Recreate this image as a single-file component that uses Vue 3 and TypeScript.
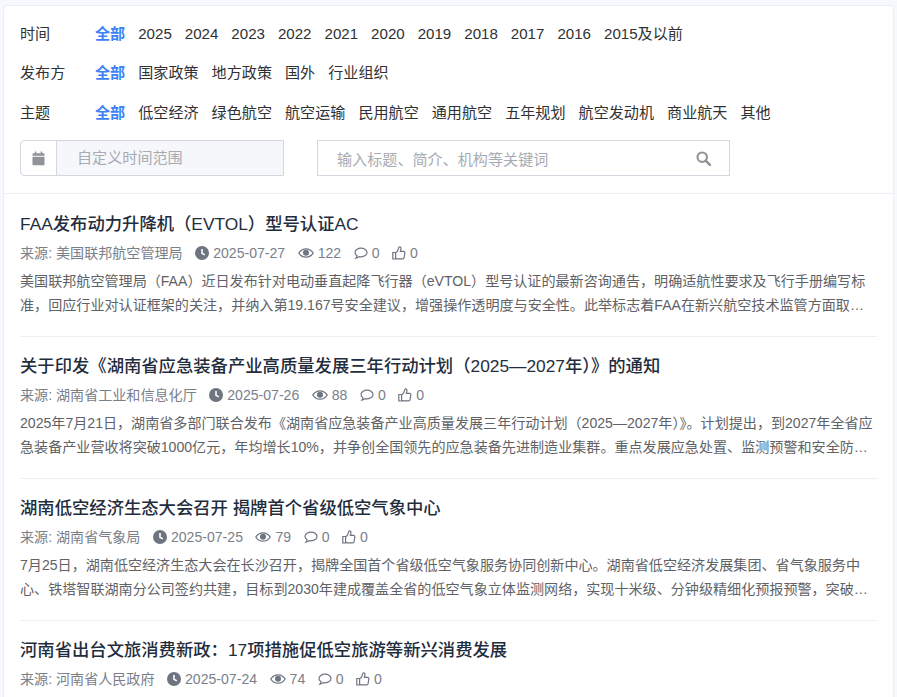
<template>
  <div class="page">
    <div class="card">
      <section class="filters">
        <div v-for="group in filterGroups" :key="group.label" class="filter-row">
          <span class="filter-label">{{ group.label }}</span>
          <div class="filter-options">
            <span class="option active">全部</span>
            <span v-for="item in group.options" :key="item" class="option">{{ item }}</span>
          </div>
        </div>
        <div class="search-row">
          <div class="date-range">
            <span class="date-icon">
              <svg width="13" height="15" viewBox="0 0 14 14" preserveAspectRatio="none">
                <path fill="#909399" d="M3 0.5h1.6v1.6h4.8V0.5H11v1.6h1.4c.6 0 1.1.5 1.1 1.1v1.3H.5V3.2c0-.6.5-1.1 1.1-1.1H3zM.5 5.4h13v6.8c0 .7-.5 1.2-1.1 1.2H1.6c-.6 0-1.1-.5-1.1-1.2z" />
              </svg>
            </span>
            <span class="date-text">自定义时间范围</span>
          </div>
          <div class="keyword">
            <span class="keyword-text">输入标题、简介、机构等关键词</span>
            <svg width="15" height="15" viewBox="0 0 14 14">
              <circle cx="5.8" cy="5.8" r="4.4" fill="none" stroke="#909399" stroke-width="2" />
              <path d="M9 9l4 4" stroke="#909399" stroke-width="2.4" stroke-linecap="round" />
            </svg>
          </div>
        </div>
      </section>

      <section class="list">
        <article v-for="news in newsList" :key="news.title" class="news-item">
          <h3 class="news-title">{{ news.title }}</h3>
          <div class="news-meta">
            <span>来源: {{ news.source }}</span>
            <span class="meta-group">
              <svg width="14" height="14" viewBox="0 0 14 14">
                <circle cx="7" cy="7" r="7" fill="#6f7580" />
                <path d="M7 3v4.3l2.8 1.6" fill="none" stroke="#fff" stroke-width="1.6" />
              </svg>
              {{ news.date }}
            </span>
            <span class="meta-group">
              <svg width="16" height="14" viewBox="0 0 16 14">
                <path d="M.8 7C2.500 4.300 5 2.800 8 2.800s5.500 1.500 7.200 4.200C13.500 9.700 11 11.200 8 11.200S2.500 9.700.8 7z" fill="none" stroke="#6f7580" stroke-width="1.300" />
                <circle cx="8" cy="6.800" r="3" fill="#6f7580" />
              </svg>
              {{ news.views }}
            </span>
            <span class="meta-group">
              <svg width="14" height="14" viewBox="0 0 14 14">
                <path d="M7 2.200c3.300 0 6 1.900 6 4.300s-2.700 4.300-6 4.300c-.7 0-1.300-.1-1.900-.2-.8.8-1.900 1.300-3.200 1.500.6-.7 1-1.500 1.100-2.400C1.900 8.900 1 7.800 1 6.500c0-2.400 2.700-4.300 6-4.300z" fill="none" stroke="#6f7580" stroke-width="1.200" />
              </svg>
              0
            </span>
            <span class="meta-group">
              <svg width="14" height="14" viewBox="0 0 14 14">
                <path d="M.8 6.500h2.800v6.500H.8zM3.600 6.800c1.300-.8 2.400-2.400 2.800-4 .2-1 .4-1.900 1.200-1.900 1.200 0 1.500 1.300 1.300 2.400-.1.800-.4 1.400-.6 2.100h3.400c.8 0 1.300.6 1.200 1.300l-.8 4.800c-.1.800-.6 1.400-1.500 1.400H6.200c-1 0-1.700-.5-2.600-.6" fill="none" stroke="#6f7580" stroke-width="1.200" />
              </svg>
              0
            </span>
          </div>
          <p v-if="news.summary" class="news-summary">{{ news.summary }}</p>
        </article>
      </section>
    </div>
  </div>
</template>

<script setup lang="ts">
interface FilterGroup {
  label: string
  options: string[]
}

interface News {
  title: string
  source: string
  date: string
  views: number
  summary: string
}

const filterGroups: FilterGroup[] = [
  {
    label: '时间',
    options: ['2025', '2024', '2023', '2022', '2021', '2020', '2019', '2018', '2017', '2016', '2015及以前']
  },
  {
    label: '发布方',
    options: ['国家政策', '地方政策', '国外', '行业组织']
  },
  {
    label: '主题',
    options: ['低空经济', '绿色航空', '航空运输', '民用航空', '通用航空', '五年规划', '航空发动机', '商业航天', '其他']
  }
]

const newsList: News[] = [
  {
    title: 'FAA发布动力升降机（EVTOL）型号认证AC',
    source: '美国联邦航空管理局',
    date: '2025-07-27',
    views: 122,
    summary: '美国联邦航空管理局（FAA）近日发布针对电动垂直起降飞行器（eVTOL）型号认证的最新咨询通告，明确适航性要求及飞行手册编写标准，回应行业对认证框架的关注，并纳入第19.167号安全建议，增强操作透明度与安全性。此举标志着FAA在新兴航空技术监管方面取得重要进展，为后续商业运营奠定基础。'
  },
  {
    title: '关于印发《湖南省应急装备产业高质量发展三年行动计划（2025—2027年）》的通知',
    source: '湖南省工业和信息化厅',
    date: '2025-07-26',
    views: 88,
    summary: '2025年7月21日，湖南省多部门联合发布《湖南省应急装备产业高质量发展三年行动计划（2025—2027年）》。计划提出，到2027年全省应急装备产业营收将突破1000亿元，年均增长10%，并争创全国领先的应急装备先进制造业集群。重点发展应急处置、监测预警和安全防护等领域，提升产业整体竞争力。'
  },
  {
    title: '湖南低空经济生态大会召开 揭牌首个省级低空气象中心',
    source: '湖南省气象局',
    date: '2025-07-25',
    views: 79,
    summary: '7月25日，湖南低空经济生态大会在长沙召开，揭牌全国首个省级低空气象服务协同创新中心。湖南省低空经济发展集团、省气象服务中心、铁塔智联湖南分公司签约共建，目标到2030年建成覆盖全省的低空气象立体监测网络，实现十米级、分钟级精细化预报预警，突破关键技术并形成行业标准。'
  },
  {
    title: '河南省出台文旅消费新政：17项措施促低空旅游等新兴消费发展',
    source: '河南省人民政府',
    date: '2025-07-24',
    views: 74,
    summary: ''
  }
]
</script>

<style scoped>
.page {
  height: 697px;
  padding: 5px 3px 0;
  box-sizing: border-box;
  overflow: hidden;
  background: #f6f8fd;
  font-family: "Liberation Sans", "Noto Sans CJK SC", sans-serif;
  font-size: 14.08px;
  color: #303133;
}

.card {
  height: 720px;
  background: #fff;
  border: 1px solid #ebeef5;
  border-radius: 4px;
}

.filters {
  padding: 8px 16px 17px;
  border-bottom: 1px solid #ebeef5;
  font-size: 15.1px;
}

.filter-row {
  display: flex;
  align-items: center;
  height: 39.5px;
  line-height: 20px;
}

.filter-label {
  width: 75px;
  flex-shrink: 0;
}

.filter-options {
  display: flex;
  gap: 13px;
}

.option {
  display: block;
  height: 20px;
}

.option.active {
  color: #3b82f6;
  font-weight: 700;
}

.search-row {
  display: flex;
  gap: 33px;
  margin-top: 7.5px;
}

.date-range {
  display: flex;
  width: 264px;
  height: 36px;
  box-sizing: border-box;
  border: 1px solid #d4d7e0;
  border-radius: 4px 0 0 4px;
  overflow: hidden;
}

.date-icon {
  display: flex;
  align-items: center;
  justify-content: center;
  width: 35px;
  border-right: 1px solid #d4d7e0;
}

.date-text {
  flex: 1;
  padding-left: 20px;
  line-height: 34px;
  background: #f5f7fa;
  color: #a8abb2;
}

.keyword {
  display: flex;
  align-items: center;
  justify-content: space-between;
  width: 413px;
  height: 36px;
  box-sizing: border-box;
  padding: 0 18px 0 19px;
  border: 1px solid #d4d7e0;
}

.keyword-text {
  color: #a8abb2;
}

.list {
  padding: 1px 16px 0;
}

.news-item {
  height: 142px;
  box-sizing: border-box;
  padding-top: 16px;
  border-bottom: 1px solid #ebeef5;
}

.news-title {
  margin: 0;
  font-size: 17.33px;
  font-weight: 500;
  line-height: 26px;
  color: #1f2d3d;
}

.news-meta {
  display: flex;
  gap: 12.5px;
  margin-top: 6px;
  line-height: 20px;
  color: #7a808a;
}

.meta-group {
  display: flex;
  align-items: center;
  gap: 4px;
}

.news-summary {
  display: -webkit-box;
  margin: 6px 0 0;
  overflow: hidden;
  line-height: 24px;
  color: #606266;
  -webkit-box-orient: vertical;
  -webkit-line-clamp: 2;
}
</style>
